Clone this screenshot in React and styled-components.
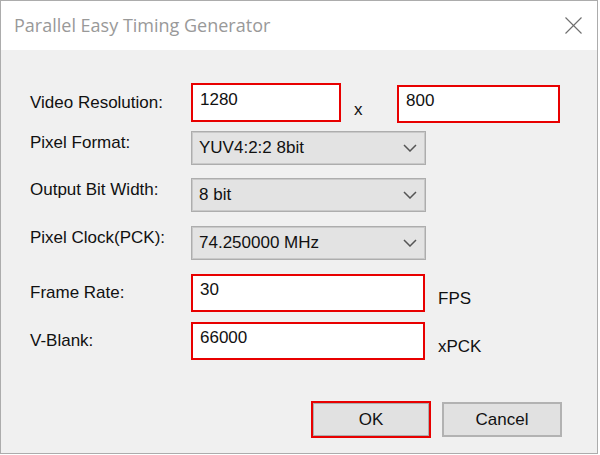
import React from 'react';
import styled, { createGlobalStyle } from 'styled-components';

const GlobalStyle = createGlobalStyle`
  html, body {
    margin: 0;
    padding: 0;
    background: #ffffff;
  }
  * {
    box-sizing: border-box;
  }
`;

const DialogWindow = styled.div`
  width: 598px;
  height: 454px;
  border: 1px solid #acacac;
  background: #f0f0f0;
  display: flex;
  flex-direction: column;
  font-family: 'Liberation Sans', Arial, sans-serif;
  font-size: 17px;
  color: #111;
`;

const TitleBar = styled.div`
  height: 49px;
  background: #ffffff;
  display: flex;
  align-items: center;
  justify-content: space-between;
  padding: 0 15px 0 13px;
`;

const Title = styled.div`
  font-family: 'Open Sans', 'Noto Sans', sans-serif;
  font-size: 18px;
  color: #999999;
  padding-bottom: 2px;
`;

const CloseButton = styled.div`
  width: 18px;
  height: 18px;
  display: flex;
  align-items: center;
  justify-content: center;
`;

const Body = styled.div`
  flex: 1;
  display: flex;
  flex-direction: column;
  padding: 33px 0 0 29px;
`;

const Row = styled.div`
  display: flex;
  align-items: ${p => (p.$top ? 'flex-start' : 'center')};
  margin-top: ${p => p.$gap || 0}px;
`;

const Label = styled.div`
  width: 161px;
  line-height: 20px;
  padding-bottom: ${p => (p.$up ? 10 : 0)}px;
  align-self: center;
`;

const Edit = styled.input`
  width: ${p => p.$w}px;
  height: ${p => p.$h || 38}px;
  margin-top: ${p => p.$mt || 0}px;
  border: 2px solid #e80000;
  background: #ffffff;
  padding: 0 7px 6px;
  font-family: inherit;
  font-size: 17px;
  color: #111;
  outline: none;
`;

const Times = styled.div`
  width: 56px;
  padding: 0 0 3px 13px;
  align-self: flex-end;
  line-height: 20px;
  margin-top: 3px;
`;

const Unit = styled.div`
  align-self: flex-end;
  line-height: 20px;
  margin: 0 0 3px 13px;
`;

const Combo = styled.div`
  width: 235px;
  height: 34px;
  border: 1px solid #adadad;
  box-shadow: inset 0 0 0 1px #c9c9c9;
  background: #e3e3e3;
  display: flex;
  align-items: center;
  justify-content: space-between;
  padding: 0 8px 0 7px;
`;

const Chevron = () => (
  <svg width="14" height="8" viewBox="0 0 14 8">
    <polyline points="1,1 7,7 13,1" fill="none" stroke="#555" strokeWidth="1.5" />
  </svg>
);

const ButtonRow = styled.div`
  display: flex;
  align-items: center;
  justify-content: flex-end;
  gap: 11px;
  margin-top: 41px;
  padding-right: 35px;
`;

const Button = styled.button`
  width: 120px;
  height: ${p => (p.$primary ? 37 : 35)}px;
  background: #e1e1e1;
  border: ${p => (p.$primary ? '2px solid #e80000' : '2px solid #b2b2b2')};
  box-shadow: ${p => (p.$primary ? 'inset 0 0 0 1px #adadad' : 'none')};
  font-family: inherit;
  font-size: 17px;
  color: #111;
  padding: 0;
`;

const fields = [
  { label: 'Pixel Format:', value: 'YUV4:2:2 8bit', gap: 8 },
  { label: 'Output Bit Width:', value: '8 bit', gap: 13 },
  { label: 'Pixel Clock(PCK):', value: '74.250000 MHz', gap: 14 },
];

export default function App() {
  return (
    <>
      <GlobalStyle />
      <DialogWindow>
        <TitleBar>
          <Title>Parallel Easy Timing Generator</Title>
          <CloseButton>
            <svg width="17" height="17" viewBox="0 0 17 17">
              <line x1="0.5" y1="0.5" x2="16.5" y2="16.5" stroke="#6d6d6d" strokeWidth="1.1" />
              <line x1="16.5" y1="0.5" x2="0.5" y2="16.5" stroke="#6d6d6d" strokeWidth="1.1" />
            </svg>
          </CloseButton>
        </TitleBar>
        <Body>
          <Row $top>
            <Label>Video Resolution:</Label>
            <Edit $w={150} $h={39} defaultValue="1280" />
            <Times>x</Times>
            <Edit $w={163} $mt={2} defaultValue="800" />
          </Row>
          {fields.map(f => (
            <Row key={f.label} $gap={f.gap}>
              <Label $up>{f.label}</Label>
              <Combo>
                <span>{f.value}</span>
                <Chevron />
              </Combo>
            </Row>
          ))}
          <Row $gap={14}>
            <Label>Frame Rate:</Label>
            <Edit $w={234} defaultValue="30" />
            <Unit>FPS</Unit>
          </Row>
          <Row $gap={10}>
            <Label>V-Blank:</Label>
            <Edit $w={234} defaultValue="66000" />
            <Unit>xPCK</Unit>
          </Row>
          <ButtonRow>
            <Button $primary>OK</Button>
            <Button>Cancel</Button>
          </ButtonRow>
        </Body>
      </DialogWindow>
    </>
  );
}
